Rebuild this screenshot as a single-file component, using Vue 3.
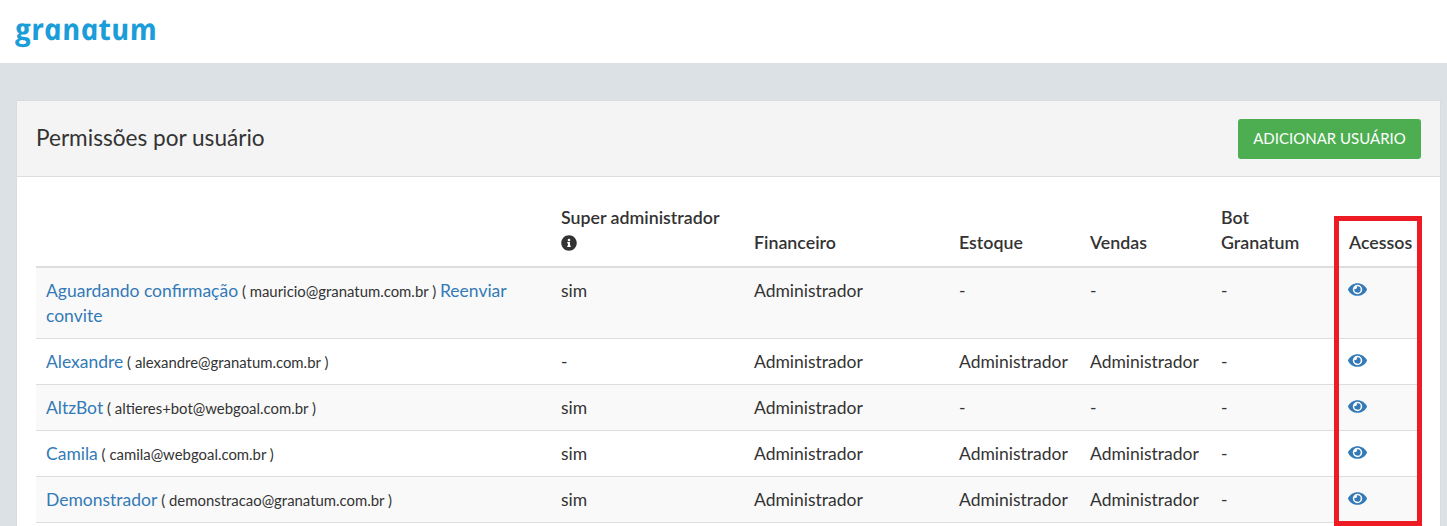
<template>
  <div class="page">
    <header class="topbar">
      <span class="logo">granatum</span>
    </header>

    <main class="content">
      <section class="panel">
        <div class="panel-heading">
          <h3>Permissões por usuário</h3>
          <button class="btn-add">ADICIONAR USUÁRIO</button>
        </div>

        <div class="panel-body">
          <table class="perm-table">
            <colgroup>
              <col class="c-user" />
              <col class="c-super" />
              <col class="c-fin" />
              <col class="c-est" />
              <col class="c-ven" />
              <col class="c-bot" />
              <col />
            </colgroup>
            <thead>
              <tr>
                <th></th>
                <th>
                  Super administrador<br />
                  <svg class="info" viewBox="0 0 512 512"><path d="M256 8C119.043 8 8 119.083 8 256c0 136.997 111.043 248 248 248s248-111.003 248-248C504 119.083 392.957 8 256 8zm0 110c23.196 0 42 18.804 42 42s-18.804 42-42 42-42-18.804-42-42 18.804-42 42-42zm56 254c0 6.627-5.373 12-12 12h-88c-6.627 0-12-5.373-12-12v-24c0-6.627 5.373-12 12-12h12v-64h-12c-6.627 0-12-5.373-12-12v-24c0-6.627 5.373-12 12-12h64c6.627 0 12 5.373 12 12v100h12c6.627 0 12 5.373 12 12v24z" /></svg>
                </th>
                <th>Financeiro</th>
                <th>Estoque</th>
                <th>Vendas</th>
                <th>Bot Granatum</th>
                <th>Acessos</th>
              </tr>
            </thead>
            <tbody>
              <tr v-for="u in usuarios" :key="u.email">
                <td>
                  <a href="#">{{ u.nome }}</a>
                  <small> ( {{ u.email }} ) </small>
                  <a v-if="u.reenviar" href="#">Reenviar convite</a>
                </td>
                <td>{{ u.superAdmin }}</td>
                <td>{{ u.financeiro }}</td>
                <td>{{ u.estoque }}</td>
                <td>{{ u.vendas }}</td>
                <td>-</td>
                <td>
                  <svg class="eye" viewBox="0 0 576 512"><path d="M572.52 241.4C518.29 135.59 410.93 64 288 64S57.68 135.64 3.48 241.41a32.35 32.35 0 0 0 0 29.19C57.71 376.41 165.07 448 288 448s230.32-71.64 284.52-177.41a32.35 32.35 0 0 0 0-29.19zM288 400a144 144 0 1 1 144-144 143.93 143.93 0 0 1-144 144zm0-240a95.31 95.31 0 0 0-25.31 3.79 47.85 47.85 0 0 1-66.9 66.9A95.78 95.78 0 1 0 288 160z" /></svg>
                </td>
              </tr>
            </tbody>
          </table>
        </div>
      </section>
    </main>

    <!-- destaque vermelho sobre a coluna Acessos -->
    <div class="highlight"></div>
  </div>
</template>

<script setup>
const usuarios = [
  { nome: 'Aguardando confirmação', email: 'mauricio@granatum.com.br', reenviar: true, superAdmin: 'sim', financeiro: 'Administrador', estoque: '-', vendas: '-' },
  { nome: 'Alexandre', email: 'alexandre@granatum.com.br', superAdmin: '-', financeiro: 'Administrador', estoque: 'Administrador', vendas: 'Administrador' },
  { nome: 'AltzBot', email: 'altieres+bot@webgoal.com.br', superAdmin: 'sim', financeiro: 'Administrador', estoque: '-', vendas: '-' },
  { nome: 'Camila', email: 'camila@webgoal.com.br', superAdmin: 'sim', financeiro: 'Administrador', estoque: 'Administrador', vendas: 'Administrador' },
  { nome: 'Demonstrador', email: 'demonstracao@granatum.com.br', superAdmin: 'sim', financeiro: 'Administrador', estoque: 'Administrador', vendas: 'Administrador' },
]
</script>

<style>
html, body { margin: 0; height: 526px; overflow: hidden; }
</style>

<style scoped>
.page {
  position: relative;
  height: 526px;
  overflow: hidden;
  background: #dce1e5;
  font-family: Lato, "Liberation Sans", sans-serif;
  font-size: 17.5px;
  line-height: 25px;
  color: #333;
}

.topbar { height: 63px; background: #fff; display: flex; align-items: center; padding-left: 14px; }
.logo {
  font-family: "Open Sans", sans-serif;
  font-style: italic;
  font-size: 30px;
  line-height: 32px;
  font-weight: 700;
  color: #1b9dd9;
  letter-spacing: .3px;
  margin-top: -6px;
  transform: skewX(11deg);
}

.content { padding: 38px 7px 0 17px; }

.panel { background: #fff; box-shadow: 0 0 1px rgba(0,0,0,.12); }
.panel-heading {
  height: 76px;
  box-sizing: border-box;
  display: flex; align-items: center; justify-content: space-between;
  padding: 0 19px;
  background: #f4f4f4;
  border-bottom: 1px solid #ddd;
}
.panel-heading h3 { margin: -2px 0 0; font-size: 22.6px; font-weight: 400; color: #333; }
.btn-add {
  width: 183px; height: 40px;
  background: #4cae50;
  border: 0; border-radius: 3px;
  color: #fff;
  font-family: inherit; font-size: 15px;
  padding: 0 0 2px;
}

.panel-body { padding: 23px 19px 20px; }

.perm-table { width: 1385px; border-collapse: collapse; table-layout: fixed; }
.c-user { width: 515px; }
.c-super { width: 193px; }
.c-fin { width: 205px; }
.c-est { width: 131px; }
.c-ven { width: 131px; }
.c-bot { width: 128px; }

th, td { text-align: left; vertical-align: top; }
th { vertical-align: bottom; font-size: 17.8px; font-weight: 600; border-bottom: 2px solid #ddd; padding: 5px 10px 11px; }
td { padding: 10px; border-bottom: 1px solid #ddd; }
tbody tr:nth-child(odd) { background: #f9f9f9; }
a { color: #337ab7; text-decoration: none; }
small { font-size: 14.9px; line-height: 1; }

.info { width: 16px; height: 16px; fill: #333; vertical-align: -2px; }
.eye { display: block; width: 19px; height: 17px; fill: #337ab7; margin: 3px 0 0 -1px; }

.highlight {
  position: absolute;
  left: 1334px; top: 216px;
  width: 88px; height: 310px;
  box-sizing: border-box;
  border: 5px solid #ed1c24;
}
</style>
